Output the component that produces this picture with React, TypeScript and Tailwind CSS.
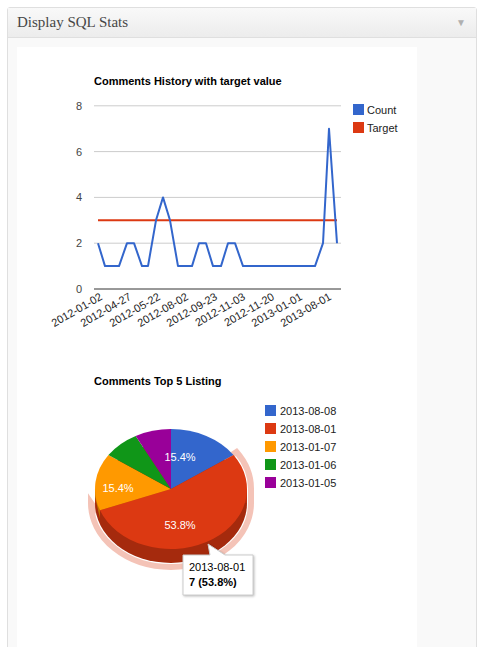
import React from "react";

const pts: [number, number][] = [
  [98, 2], [105, 1], [119, 1], [127, 2], [134, 2], [142, 1], [148, 1], [156, 3], [163, 4], [170, 3],
  [178, 1], [192, 1], [199, 2], [206, 2], [213, 1], [221, 1], [228, 2], [235, 2], [243, 1], [315, 1],
  [323, 2], [329, 7], [337, 2],
];
const yv = (v: number) => 290 - v * 22.9;
const labels: [string, number][] = [
  ["2012-01-02", 103], ["2012-04-27", 132], ["2012-05-22", 161], ["2012-08-02", 189], ["2012-09-23", 218],
  ["2012-11-03", 246], ["2012-11-20", 275], ["2013-01-01", 303], ["2013-08-01", 332],
];

const cx = 171, cy = 490, rx = 76, ry = 60, depth = 14;
const pt = (deg: number, dy = 0) => {
  const r = (deg * Math.PI) / 180;
  return [cx + rx * Math.sin(r), cy + dy - ry * Math.cos(r)];
};
const slice = (a: number, b: number) => {
  const [x1, y1] = pt(a);
  const [x2, y2] = pt(b);
  const large = b - a > 180 ? 1 : 0;
  return `M${cx},${cy} L${x1},${y1} A${rx},${ry} 0 ${large} 1 ${x2},${y2} Z`;
};
const slices = [
  { a: 0, b: 55.4, c: "#3366cc" },
  { a: 55.4, b: 249.2, c: "#dc3912" },
  { a: 249.2, b: 304.6, c: "#ff9900" },
  { a: 304.6, b: 332.3, c: "#109618" },
  { a: 332.3, b: 360, c: "#990099" },
];
const pieLegend: [string, string][] = [
  ["2013-08-08", "#3366cc"], ["2013-08-01", "#dc3912"], ["2013-01-07", "#ff9900"],
  ["2013-01-06", "#109618"], ["2013-01-05", "#990099"],
];

export default function App() {
  const f = { fontFamily: "'Liberation Sans', Arial, sans-serif" };
  const [sx1, sy1] = pt(55.4);
  const [sx2, sy2] = pt(249.2);
  return (
    <div className="w-[486px] h-[647px] bg-white pt-[7px] pl-[7px] overflow-hidden">
      <div className="w-[470px] h-[650px] border border-[#dfdfdf] rounded-[3px] bg-[#f9f9f9] flex flex-col">
        <div className="h-[30px] shrink-0 flex items-center justify-between px-[9px] border-b border-[#dfdfdf] bg-gradient-to-b from-[#f9f9f9] to-[#ececec]">
          <span className="text-[15px] text-[#464646]" style={{ fontFamily: "'Liberation Serif', Georgia, serif" }}>Display SQL Stats</span>
          <span className="text-[10px] text-[#b0b0b0] mr-[1px]">▼</span>
        </div>
        <div className="pl-[9px] pt-[9px]">
          <div className="w-[400px] h-[620px] bg-white">
            <svg width="400" height="302" style={f}>
              <g transform="translate(-17,-48)">
                <text x="94" y="86" fontSize="11" fontWeight="bold" fill="#000">Comments History with target value</text>
                {[8, 6, 4, 2].map((v) => (
                  <g key={v}>
                    <line x1="94" x2="341" y1={yv(v)} y2={yv(v)} stroke="#cccccc" />
                    <text x="82" y={yv(v) + 4} fontSize="11" fill="#444" textAnchor="end">{v}</text>
                  </g>
                ))}
                <text x="82" y="294" fontSize="11" fill="#444" textAnchor="end">0</text>
                <line x1="98" x2="337" y1={yv(3)} y2={yv(3)} stroke="#dc3912" strokeWidth="2" />
                <polyline points={pts.map(([x, v]) => `${x},${yv(v)}`).join(" ")} fill="none" stroke="#3366cc" strokeWidth="2" strokeLinejoin="round" />
                <line x1="94" x2="341" y1="290" y2="290" stroke="#333" />
                {labels.map(([t, x]) => (
                  <text key={t} x={x} y="300" fontSize="11" fill="#222" textAnchor="end" transform={`rotate(-30 ${x} 300)`}>{t}</text>
                ))}
                <rect x="353" y="105" width="11" height="11" fill="#3366cc" />
                <text x="367" y="115" fontSize="11" fill="#222">Count</text>
                <rect x="353" y="123" width="11" height="11" fill="#dc3912" />
                <text x="367" y="133" fontSize="11" fill="#222">Target</text>
              </g>
            </svg>
            <svg width="400" height="318" style={f}>
              <g transform="translate(-17,-350)">
                <text x="94" y="386" fontSize="11" fontWeight="bold" fill="#000">Comments Top 5 Listing</text>
                {/* highlight ring */}
                <path d={`M${cx},${cy + 6} L${sx1 + 3},${sy1 - 3} A${rx + 4},${ry + 4} 0 0 1 ${cx + rx + 4},${cy} L${cx + rx + 4},${cy + depth} A${rx + 4},${ry + 4} 0 0 1 ${cx - rx - 4},${cy + depth} L${sx2 - 4},${sy2}Z`} fill="none" stroke="#dc3912" strokeOpacity="0.3" strokeWidth="6" />
                <ellipse cx={cx} cy={cy + depth} rx={rx} ry={ry} fill="#a52a0d" />
                <rect x={cx - rx} y={cy} width={2 * rx} height={depth} fill="#b8300f" />
                <path d={`M${cx - rx},${cy} L${cx - rx},${cy + 8} L${sx2},${sy2 + 8} L${sx2},${sy2}Z`} fill="#bf7300" />
                {slices.map((s) => (
                  <path key={s.c} d={slice(s.a, s.b)} fill={s.c} />
                ))}
                <text x="180" y="462" fontSize="11" fill="#fff" textAnchor="middle">15.4%</text>
                <text x="118" y="493" fontSize="11" fill="#fff" textAnchor="middle">15.4%</text>
                <text x="180" y="530" fontSize="11" fill="#fff" textAnchor="middle">53.8%</text>
                {pieLegend.map(([t, c], i) => (
                  <g key={t}>
                    <rect x="265" y={406 + i * 18} width="11" height="11" fill={c} />
                    <text x="280" y={416 + i * 18} fontSize="11" fill="#222">{t}</text>
                  </g>
                ))}
                <g filter="drop-shadow(1px 1px 1px rgba(0,0,0,0.25))">
                  <path d="M183,556 L210,556 L208,545 L225,556 L253,556 L253,596 L183,596 Z" fill="#fff" stroke="#ccc" />
                </g>
                <text x="189" y="572" fontSize="11" fill="#000">2013-08-01</text>
                <text x="189" y="587" fontSize="11" fontWeight="bold" fill="#000">7 (53.8%)</text>
              </g>
            </svg>
          </div>
        </div>
      </div>
    </div>
  );
}
